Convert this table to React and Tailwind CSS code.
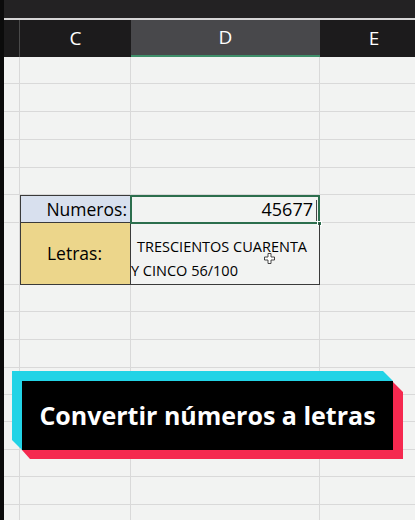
import React from "react";

const rowHeights = [27, 28, 28, 28, 27, 28, 62, 27, 28, 28, 27, 27, 28, 27, 28, 28];

function GridRow({ h, children }) {
  return (
    <div className="flex shrink-0" style={{ height: h }}>
      {children}
    </div>
  );
}

function Plain() {
  return (
    <>
      <div className="w-[16px] shrink-0 border-r border-b border-[#d9d9d9]" />
      <div className="w-[111px] shrink-0 border-r border-b border-[#d9d9d9]" />
      <div className="w-[189px] shrink-0 border-r border-b border-[#d9d9d9]" />
      <div className="flex-1 border-b border-[#d9d9d9]" />
    </>
  );
}

export default function App() {
  const font = { fontFamily: '"Open Sans", "Noto Sans", sans-serif' };
  return (
    <div className="relative w-[415px] h-[520px] overflow-hidden bg-[#0b0b0b] flex" style={font}>
      <div className="w-[4px] shrink-0 bg-[#0b0b0b]" />
      <div className="flex-1 flex flex-col bg-[#f2f3f2]">
        {/* top bar */}
        <div className="h-[18px] shrink-0 bg-[#232223]" />
        <div className="h-[2px] shrink-0 bg-[#d6d6d6]" />
        {/* column header */}
        <div className="h-[37px] shrink-0 flex bg-[#1c1b1c] text-white text-[19px]">
          <div className="w-[16px] shrink-0 border-r border-[#4a4a4a]" />
          <div className="w-[111px] shrink-0 flex items-center justify-center">C</div>
          <div className="w-[189px] shrink-0 flex items-center justify-center bg-[#48484b] border-b-2 border-[#3f8f6a]">D</div>
          <div className="w-[108px] shrink-0 flex items-center justify-center">E</div>
        </div>
        {/* grid */}
        {rowHeights.map((h, i) => {
          if (i === 5) {
            return (
              <GridRow key={i} h={h}>
                <div className="w-[16px] shrink-0 border-r border-b border-[#d9d9d9]" />
                <div className="w-[111px] shrink-0 border border-[#3a3a3a] bg-[#d8e0ee] flex items-center justify-end pr-[3px] text-[17.5px] text-black">
                  Numeros:
                </div>
                <div className="relative w-[189px] shrink-0 border-t border-r border-[#3a3a3a] flex items-center justify-end pr-[6px] text-[18px] text-black">
                  45677
                  <div className="absolute right-[2px] top-[4px] w-[1.5px] h-[21px] bg-[#444]" />
                  <div className="absolute -left-[1px] -top-[1px] -right-[1px] -bottom-[1px] border-2 border-[#2c6e4d]" />
                  <div className="absolute -right-[3px] -bottom-[3px] w-[5px] h-[5px] bg-[#2c6e4d] border border-white" />
                </div>
                <div className="flex-1 border-b border-[#d9d9d9]" />
              </GridRow>
            );
          }
          if (i === 6) {
            return (
              <GridRow key={i} h={h}>
                <div className="w-[16px] shrink-0 border-r border-b border-[#d9d9d9]" />
                <div className="w-[111px] shrink-0 border-x border-b border-[#3a3a3a] bg-[#ecd68b] flex items-center justify-center text-[17.5px] text-black pr-[2px]">
                  Letras:
                </div>
                <div className="relative w-[189px] shrink-0 border-r border-b border-[#3a3a3a] flex flex-col justify-center text-[14.5px] leading-[24px] text-black pt-[10px]">
                  <div className="pl-[6px] whitespace-nowrap">TRESCIENTOS CUARENTA</div>
                  <div className="pl-[0px] whitespace-nowrap">Y CINCO 56/100</div>
                  <svg className="absolute left-[133px] top-[30px]" width="11" height="11" viewBox="0 0 11 11">
                    <path d="M4 0.5h3v3.5h3.5v3h-3.5v3.5h-3v-3.5h-3.5v-3h3.5z" fill="#fff" stroke="#333" strokeWidth="0.9" />
                  </svg>
                </div>
                <div className="flex-1 border-b border-[#d9d9d9]" />
              </GridRow>
            );
          }
          return (
            <GridRow key={i} h={h}>
              <Plain />
            </GridRow>
          );
        })}
      </div>

      {/* banner overlay */}
      <div className="absolute left-0 top-0 w-[415px] h-[520px] pointer-events-none">
        <svg className="absolute left-0 top-0" width="415" height="520" viewBox="0 0 415 520">
          <polygon points="12,371 383,371 393,381 393,400 22,450 12,440" fill="#22d3e6" />
          <polygon points="393,382 403,392 403,459 30,459 22,450 393,450" fill="#f5294f" />
        </svg>
        <div
          className="absolute left-[22px] top-[381px] w-[371px] h-[69px] bg-black flex items-center justify-center text-white text-[25px] font-bold"
          style={{ fontFamily: '"Open Sans", sans-serif' }}
        >
          Convertir números a letras
        </div>
      </div>
    </div>
  );
}
